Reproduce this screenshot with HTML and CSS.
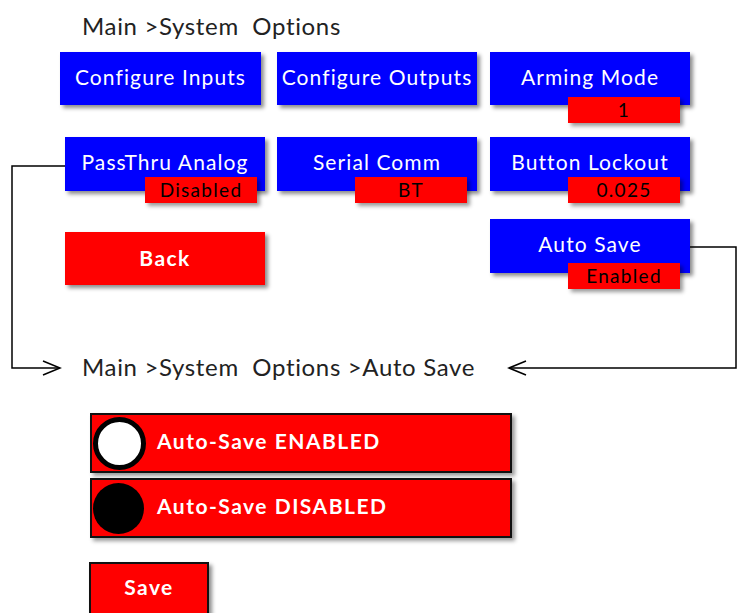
FILE: index.html
```html
<!DOCTYPE html>
<html>
<head>
<meta charset="utf-8">
<link rel="stylesheet" href="styles.css">
</head>
<body>
<div class="page">
  <div class="crumb crumb-top">Main &gt;System&nbsp; Options</div>
  <div class="menu">
    <div class="btn blue c1">Configure Inputs</div>
    <div class="btn blue">Configure Outputs</div>
    <div class="btn blue">Arming Mode<span class="badge badge-low">1</span></div>
    <div class="btn blue c1 r2">PassThru Analog<span class="badge badge-left">Disabled</span></div>
    <div class="btn blue r2">Serial Comm<span class="badge">BT</span></div>
    <div class="btn blue r2">Button Lockout<span class="badge">0.025</span></div>
    <div class="btn red bold c1 back">Back</div>
    <div class="btn blue autosave">Auto Save<span class="badge badge-auto">Enabled</span></div>
  </div>
  <div class="crumb crumb-sub">Main &gt;System&nbsp; Options &gt;Auto Save</div>
  <div class="options">
    <div class="option"><span class="radio radio-off"></span><span class="option-label">Auto-Save ENABLED</span></div>
    <div class="option"><span class="radio radio-on"></span><span class="option-label">Auto-Save DISABLED</span></div>
  </div>
  <div class="btn red bold save">Save</div>
  <svg class="connectors" width="738" height="613" viewBox="0 0 738 613">
    <polyline points="65,166 12,166 12,368 59,368" fill="none" stroke="#000" stroke-width="1.5"/>
    <polyline points="43,361 60,368 43,375" fill="none" stroke="#000" stroke-width="1.5"/>
    <polyline points="690,247 736,247 736,368 510,368" fill="none" stroke="#000" stroke-width="1.5"/>
    <polyline points="526,361 509,368 526,375" fill="none" stroke="#000" stroke-width="1.5"/>
  </svg>
</div>
</body>
</html>
```
FILE: styles.css
```css
html, body {
  margin: 0;
  padding: 0;
  background: #fff;
}
.page {
  position: relative;
  width: 738px;
  height: 613px;
  overflow: hidden;
  font-family: Lato, "Open Sans", sans-serif;
}
.crumb {
  font-size: 24px;
  line-height: 28px;
  letter-spacing: 0.65px;
  color: #222;
  margin-left: 82px;
  white-space: pre;
}
.crumb-top {
  padding-top: 12px;
  margin-bottom: 12px;
}
.menu {
  display: grid;
  grid-template-columns: 217px 213px 200px;
  margin-left: 60px;
  align-items: start;
}
.btn {
  position: relative;
  box-sizing: border-box;
  width: 200px;
  height: 53px;
  display: flex;
  align-items: center;
  justify-content: center;
  color: #fff;
  font-size: 21px;
  letter-spacing: 1.1px;
  box-shadow: 3px 3px 4px rgba(0, 0, 0, 0.45);
  white-space: nowrap;
}
.blue {
  background: #0000ff;
  padding-bottom: 5px;
}
.red {
  background: #ff0000;
  padding-bottom: 2px;
}
.bold { font-weight: 700; letter-spacing: 1.4px; }
.c1 { width: 201px; }
.r2 { margin-top: 32px; height: 54px; }
.c1.r2, .c1.back { margin-left: 5px; width: 200px; }
.back { margin-top: 41px; }
.autosave { grid-column: 3; margin-top: 28px; height: 54px; }
.badge {
  position: absolute;
  right: 10px;
  top: 40px;
  width: 112px;
  height: 26px;
  background: #ff0000;
  color: #000;
  font-size: 19px;
  letter-spacing: 1.3px;
  line-height: 26px;
  text-align: center;
  box-shadow: 3px 3px 4px rgba(0, 0, 0, 0.4);
}
.badge-low { top: 45px; }
.badge-left { right: 8px; }
.badge-auto { top: 44px; }
.crumb-sub {
  margin-top: 68px;
}
.options {
  margin-left: 90px;
  margin-top: 32px;
  width: 422px;
  display: flex;
  flex-direction: column;
  gap: 5px;
}
.option {
  box-sizing: border-box;
  height: 60px;
  background: #ff0000;
  border: 2px solid #111;
  display: flex;
  align-items: center;
  gap: 11px;
  color: #fff;
  font-weight: 700;
  font-size: 21px;
  letter-spacing: 1.5px;
  box-shadow: 3px 3px 4px rgba(0, 0, 0, 0.4);
}
.option-label {
  margin-bottom: 6px;
}
.radio {
  box-sizing: border-box;
  width: 53px;
  height: 53px;
  border-radius: 50%;
  margin-left: 1px;
}
.radio-off {
  background: #fff;
  border: 5px solid #000;
}
.radio-on {
  background: #000;
  width: 51px;
  height: 51px;
  margin-right: 2px;
}
.save {
  margin-top: 24px;
  margin-left: 89px;
  width: 120px;
  height: 54px;
  border: 2px solid #111;
  padding-bottom: 6px;
}
.connectors {
  position: absolute;
  left: 0;
  top: 0;
  pointer-events: none;
}
```
